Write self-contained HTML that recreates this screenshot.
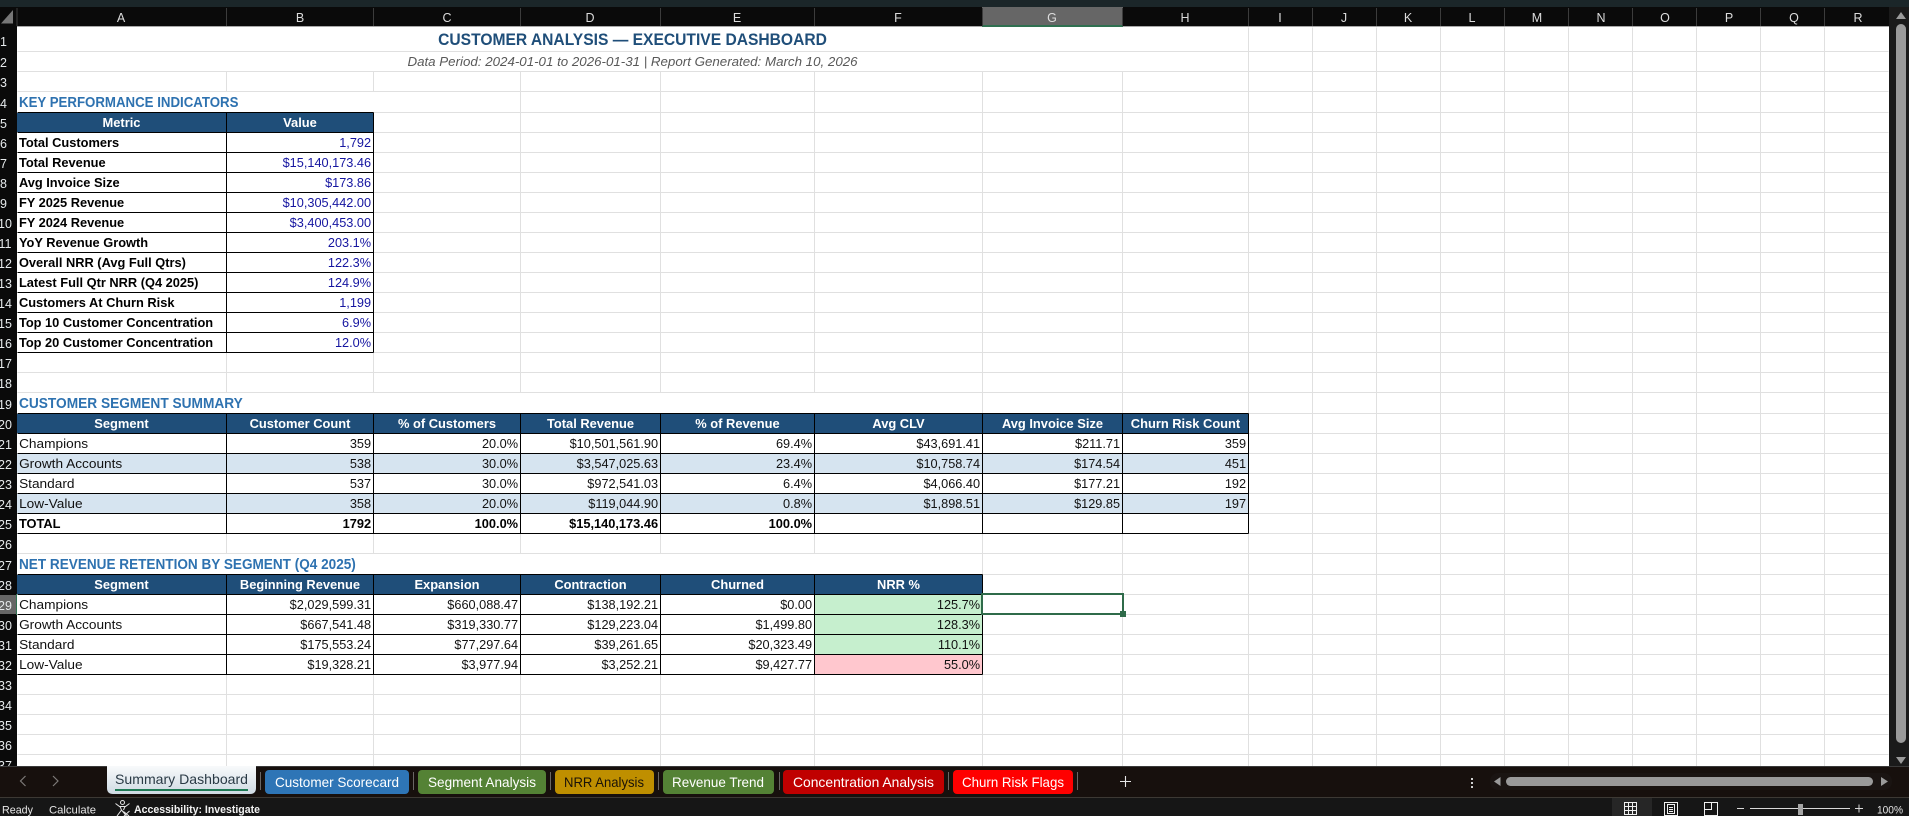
<!DOCTYPE html>
<html><head><meta charset="utf-8"><title>Customer Analysis</title>
<style>
html,body{margin:0;padding:0;background:#fff;width:1909px;height:816px;overflow:hidden}
svg{position:absolute;left:0;top:0}
svg text{font-family:"Liberation Sans",sans-serif}
#cells{position:absolute;left:0;top:0;width:1909px;height:816px;font:13.2px "Liberation Sans",sans-serif;color:#111}
.r{position:absolute;left:0;width:1909px;height:20px}
.r span{position:absolute;top:0;height:20px;line-height:20px;white-space:nowrap;box-sizing:border-box}
.A{left:17px;width:209px}.B{left:227px;width:146px}.C{left:374px;width:146px}.D{left:521px;width:139px}
.E{left:661px;width:153px}.F{left:815px;width:167px}.G{left:983px;width:139px}.H{left:1123px;width:125px}
.n{text-align:right;padding-right:2px;transform-origin:right center;transform:scaleX(.965)}
.l{padding-left:2px;transform-origin:left center;transform:scaleX(1.035)}
.L{padding-left:2px;transform-origin:left center;transform:scaleX(.972);font-weight:bold;color:#000}
.h{text-align:center;color:#fff;font-weight:bold;transform:scaleX(.976)}
.v{color:#1515a0}
.t{font-weight:bold;color:#000;transform:scaleX(.97)}
.sec{position:absolute;left:19px;height:21px;line-height:21px;font-size:14.4px;font-weight:bold;color:#2e72b0;white-space:nowrap;transform-origin:left center}
.title{position:absolute;left:17px;width:1231px;top:27px;height:25px;line-height:25px;text-align:center;font-size:16.8px;font-weight:bold;color:#1f4e79;white-space:nowrap;transform:scaleX(.93)}
.sub{position:absolute;left:17px;width:1231px;top:52px;height:20px;line-height:20px;text-align:center;font-size:12.6px;font-style:italic;color:#595959;white-space:nowrap;transform:scaleX(1.058)}
</style></head>
<body>
<svg width="1909" height="816" viewBox="0 0 1909 816" xmlns="http://www.w3.org/2000/svg">
<rect width="1909" height="816" fill="#fff"/>
<!-- fills -->
<g shape-rendering="crispEdges">
<rect x="17" y="113" width="356" height="19" fill="#1f4e79"/>
<rect x="17" y="414" width="1231" height="19" fill="#1f4e79"/>
<rect x="17" y="575" width="965" height="19" fill="#1f4e79"/>
<rect x="17" y="454" width="1231" height="19" fill="#d6e4f0"/>
<rect x="17" y="494" width="1231" height="19" fill="#d6e4f0"/>
<rect x="815" y="595" width="167" height="59" fill="#c6efce"/>
<rect x="815" y="655" width="167" height="19" fill="#ffc7ce"/>
</g>
<!-- gridlines -->
<g transform="translate(.5,.5)" shape-rendering="crispEdges" fill="none">
<path stroke="#e0e0e0" d="M17 51H1888M17 71H1888M17 91H1888M17 112H1888M17 132H1888M17 152H1888M17 172H1888M17 192H1888M17 212H1888M17 232H1888M17 252H1888M17 272H1888M17 292H1888M17 312H1888M17 332H1888M17 352H1888M17 372H1888M17 392H1888M17 413H1888M17 433H1888M17 453H1888M17 473H1888M17 493H1888M17 513H1888M17 533H1888M17 553H1888M17 574H1888M17 594H1888M17 614H1888M17 634H1888M17 654H1888M17 674H1888M17 694H1888M17 714H1888M17 734H1888M17 754H1888"/>
<path stroke="#e0e0e0" d="M226 71V91M226 112V392M226 413V553M226 574V766M373 71V91M373 112V392M373 413V553M373 574V766M520 71V392M520 413V553M520 574V766M660 71V392M660 413V553M660 574V766M814 71V392M814 413V553M814 574V766M982 71V766M1122 71V766M1248 27V766M1312 27V766M1376 27V766M1440 27V766M1504 27V766M1568 27V766M1632 27V766M1696 27V766M1760 27V766M1824 27V766"/>
<!-- table borders -->
<path stroke="#000" d="M17 112H373M17 132H373M17 152H373M17 172H373M17 192H373M17 212H373M17 232H373M17 252H373M17 272H373M17 292H373M17 312H373M17 332H373M17 352H373M226 112V352M373 112V352"/>
<path stroke="#000" d="M17 413H1248M17 433H1248M17 453H1248M17 473H1248M17 493H1248M17 513H1248M17 533H1248M226 413V533M373 413V533M520 413V533M660 413V533M814 413V533M982 413V533M1122 413V533M1248 413V533"/>
<path stroke="#000" d="M17 574H982M17 594H982M17 614H982M17 634H982M17 654H982M17 674H982M226 574V674M373 574V674M520 574V674M660 574V674M814 574V674M982 574V674"/>
</g>
<!-- top chrome and headers -->
<rect width="1909" height="7" fill="#1b2629"/>
<rect y="7" width="1889" height="19" fill="#0a0a0a"/>
<rect y="26" width="1889" height="1" fill="#a8a8a8"/>
<rect y="7" width="17" height="760" fill="#0a0a0a"/>
<rect y="7" x="982" width="141" height="19" fill="#666"/>
<rect y="25" x="982" width="141" height="2" fill="#2f7050"/>
<rect y="595" x="0" width="17" height="19" fill="#666"/>
<rect y="594" x="16" width="1" height="21" fill="#2f7050"/>
<polygon points="13,10 13,23.5 1,23.5" fill="#777"/>
<path d="M17 8V26M226.5 8V26M373.5 8V26M520.5 8V26M660.5 8V26M814.5 8V26M982.5 8V26M1122.5 8V26M1248.5 8V26M1312.5 8V26M1376.5 8V26M1440.5 8V26M1504.5 8V26M1568.5 8V26M1632.5 8V26M1696.5 8V26M1760.5 8V26M1824.5 8V26" stroke="#3c3c3c" fill="none" shape-rendering="crispEdges"/>
<g font-size="12.5" fill="#dcdcdc" text-anchor="middle">
<text x="121" y="22">A</text><text x="300" y="22">B</text><text x="447" y="22">C</text><text x="590" y="22">D</text><text x="737" y="22">E</text><text x="898" y="22">F</text><text x="1052" y="22">G</text><text x="1185" y="22">H</text><text x="1280" y="22">I</text><text x="1344" y="22">J</text><text x="1408" y="22">K</text><text x="1472" y="22">L</text><text x="1537" y="22">M</text><text x="1601" y="22">N</text><text x="1665" y="22">O</text><text x="1729" y="22">P</text><text x="1794" y="22">Q</text><text x="1858" y="22">R</text>
</g>
<g font-size="12.5" fill="#e6eaec" text-anchor="middle">
<text x="3.5" y="46">1</text><text x="3.5" y="67">2</text><text x="3.5" y="87">3</text><text x="3.5" y="108">4</text><text x="3.5" y="128">5</text><text x="3.5" y="148">6</text><text x="3.5" y="168">7</text><text x="3.5" y="188">8</text><text x="3.5" y="208">9</text>
<text x="5" y="228">10</text><text x="5" y="248">11</text><text x="5" y="268">12</text><text x="5" y="288">13</text><text x="5" y="308">14</text><text x="5" y="328">15</text><text x="5" y="348">16</text><text x="5" y="368">17</text><text x="5" y="388">18</text><text x="5" y="409">19</text><text x="5" y="429">20</text><text x="5" y="449">21</text><text x="5" y="469">22</text><text x="5" y="489">23</text><text x="5" y="509">24</text><text x="5" y="529">25</text><text x="5" y="549">26</text><text x="5" y="570">27</text><text x="5" y="590">28</text><text x="5" y="610">29</text><text x="5" y="630">30</text><text x="5" y="650">31</text><text x="5" y="670">32</text><text x="5" y="690">33</text><text x="5" y="710">34</text><text x="5" y="730">35</text><text x="5" y="750">36</text><text x="5" y="770">37</text>
</g>
<!-- selection -->
<rect x="982" y="594" width="141" height="20" fill="none" stroke="#2f6b4a" stroke-width="2"/>
<rect x="1120" y="611" width="6" height="6" fill="#2f6b4a"/>
<!-- vertical scrollbar -->
<rect x="1889" y="7" width="20" height="760" fill="#1a1a1a"/>
<rect x="1896" y="24" width="10" height="719" rx="5" fill="#9a9a9a"/>
<polygon points="1901,12 1906,19 1896,19" fill="#9a9a9a"/>
<polygon points="1896,757 1906,757 1901,764" fill="#9a9a9a"/>
<!-- tab bar -->
<rect y="766" width="1909" height="32" fill="#17100d"/>
<rect y="766" width="1909" height="1" fill="#3a3a3a"/>
<rect y="797" width="1909" height="1" fill="#3d3934"/>
<rect y="798" width="1909" height="18" fill="#161616"/>
<path d="M25.5 776l-5 5 5 5M53 776l5 5-5 5" fill="none" stroke="#7d7a78" stroke-width="1.2"/>
<defs><linearGradient id="at" x1="0" y1="0" x2="0" y2="1"><stop offset="0" stop-color="#f8fafb"/><stop offset="1" stop-color="#cfdae3"/></linearGradient></defs>
<path d="M107 766H256V788Q256 794 250 794H113Q107 794 107 788Z" fill="url(#at)"/>
<rect x="115" y="789" width="133" height="2" fill="#1f7a55"/>
<text x="115" y="784" font-size="14" fill="#2a3a45" textLength="133" lengthAdjust="spacingAndGlyphs">Summary Dashboard</text>
<g fill="#6a6664" shape-rendering="crispEdges"><rect x="260" y="772" width="1" height="18"/><rect x="413" y="772" width="1" height="18"/><rect x="550" y="772" width="1" height="18"/><rect x="658" y="772" width="1" height="18"/><rect x="779" y="772" width="1" height="18"/><rect x="948" y="772" width="1" height="18"/><rect x="1077" y="772" width="1" height="18"/></g>
<rect x="265" y="770" width="144" height="24" rx="4" fill="#2e75b6"/>
<rect x="418" y="770" width="128" height="24" rx="4" fill="#548235"/>
<rect x="555" y="770" width="99" height="24" rx="4" fill="#bf8f00"/>
<rect x="663" y="770" width="111" height="24" rx="4" fill="#548235"/>
<rect x="783" y="770" width="161" height="24" rx="4" fill="#c00000"/>
<rect x="953" y="770" width="120" height="24" rx="4" fill="#ff0000"/>
<g font-size="14" fill="#fff">
<text x="275" y="787" textLength="124" lengthAdjust="spacingAndGlyphs">Customer Scorecard</text>
<text x="428" y="787" textLength="108" lengthAdjust="spacingAndGlyphs">Segment Analysis</text>
<text x="564" y="787" fill="#1a1208" textLength="80" lengthAdjust="spacingAndGlyphs">NRR Analysis</text>
<text x="672" y="787" textLength="92" lengthAdjust="spacingAndGlyphs">Revenue Trend</text>
<text x="793" y="787" textLength="141" lengthAdjust="spacingAndGlyphs">Concentration Analysis</text>
<text x="962" y="787" textLength="102" lengthAdjust="spacingAndGlyphs">Churn Risk Flags</text>
</g>
<path d="M1125.5 776V787M1120 781.5H1131" stroke="#e6e6e6" stroke-width="1.1" fill="none"/>
<g fill="#d0d0d0"><rect x="1471" y="778" width="2" height="2"/><rect x="1471" y="782" width="2" height="2"/><rect x="1471" y="786" width="2" height="2"/></g>
<!-- horizontal scrollbar -->
<rect x="1490" y="773" width="402" height="17" rx="8" fill="#1a1412"/>
<rect x="1506" y="777" width="367" height="9" rx="4.5" fill="#9a9a9a"/>
<polygon points="1500.5,777 1500.5,786 1494,781.5" fill="#9a9a9a"/>
<polygon points="1881,777 1881,786 1888,781.5" fill="#9a9a9a"/>
<!-- status bar -->
<g font-size="11" fill="#e6e6e6">
<text x="2" y="813.5" textLength="31" lengthAdjust="spacingAndGlyphs">Ready</text>
<text x="49" y="813.5" textLength="47" lengthAdjust="spacingAndGlyphs">Calculate</text>
<text x="134" y="813" font-weight="bold" fill="#f2f2f2" textLength="126" lengthAdjust="spacingAndGlyphs">Accessibility: Investigate</text>
</g>
<g fill="none" stroke="#e6e6e6" stroke-width="1">
<circle cx="122.5" cy="802.5" r="2"/>
<path d="M115.5 803.5L119.5 806.5H125.5L129.5 803.5M120 806.5L121.5 810L117 816M125 806.5L123.5 810M121.5 810L126.5 816M123.5 811.5L129 816M129.5 811L124 816"/>
</g>
<rect x="1612" y="798" width="40" height="18" fill="#262626"/>
<g fill="none" stroke="#f0f0f0" stroke-width="1" shape-rendering="crispEdges">
<path d="M1624.5 802.5H1636.5V814.5H1624.5ZM1628.5 802.5V814.5M1632.5 802.5V814.5M1624.5 806.5H1636.5M1624.5 810.5H1636.5"/>
<path d="M1664.5 802.5H1677.5V815.5H1664.5ZM1667.5 804.5H1674.5V813.5H1667.5ZM1669 807.5H1673M1669 809.5H1673M1669 811.5H1673"/>
<path d="M1704.5 802.5H1717.5V815.5H1704.5ZM1711.5 802.5V809.5H1704.5"/>
</g>
<path d="M1737 808.5H1744M1750 808.5H1850M1855 808.5H1863M1859 804.5V812.5" stroke="#d8d8d8" stroke-width="1" fill="none" shape-rendering="crispEdges"/>
<rect x="1798" y="804" width="5" height="11" fill="#a6a6a6"/>
<text x="1877" y="813.5" font-size="11" fill="#e6e6e6" textLength="26" lengthAdjust="spacingAndGlyphs">100%</text>
</svg>

<div id="cells">
<div class="title">CUSTOMER ANALYSIS — EXECUTIVE DASHBOARD</div>
<div class="sub">Data Period: 2024-01-01 to 2026-01-31 | Report Generated: March 10, 2026</div>
<div class="sec" style="top:93px;transform:scaleX(.921)">KEY PERFORMANCE INDICATORS</div>
<div class="sec" style="top:394px;transform:scaleX(.952)">CUSTOMER SEGMENT SUMMARY</div>
<div class="sec" style="top:555px;transform:scaleX(.943)">NET REVENUE RETENTION BY SEGMENT (Q4 2025)</div>

<div class="r" style="top:113px"><span class="A h">Metric</span><span class="B h">Value</span></div>
<div class="r" style="top:133px"><span class="A L">Total Customers</span><span class="B n v">1,792</span></div>
<div class="r" style="top:153px"><span class="A L">Total Revenue</span><span class="B n v">$15,140,173.46</span></div>
<div class="r" style="top:173px"><span class="A L">Avg Invoice Size</span><span class="B n v">$173.86</span></div>
<div class="r" style="top:193px"><span class="A L">FY 2025 Revenue</span><span class="B n v">$10,305,442.00</span></div>
<div class="r" style="top:213px"><span class="A L">FY 2024 Revenue</span><span class="B n v">$3,400,453.00</span></div>
<div class="r" style="top:233px"><span class="A L">YoY Revenue Growth</span><span class="B n v">203.1%</span></div>
<div class="r" style="top:253px"><span class="A L">Overall NRR (Avg Full Qtrs)</span><span class="B n v">122.3%</span></div>
<div class="r" style="top:273px"><span class="A L">Latest Full Qtr NRR (Q4 2025)</span><span class="B n v">124.9%</span></div>
<div class="r" style="top:293px"><span class="A L">Customers At Churn Risk</span><span class="B n v">1,199</span></div>
<div class="r" style="top:313px"><span class="A L">Top 10 Customer Concentration</span><span class="B n v">6.9%</span></div>
<div class="r" style="top:333px"><span class="A L">Top 20 Customer Concentration</span><span class="B n v">12.0%</span></div>

<div class="r" style="top:414px"><span class="A h">Segment</span><span class="B h">Customer Count</span><span class="C h">% of Customers</span><span class="D h">Total Revenue</span><span class="E h">% of Revenue</span><span class="F h">Avg CLV</span><span class="G h">Avg Invoice Size</span><span class="H h">Churn Risk Count</span></div>
<div class="r" style="top:434px"><span class="A l">Champions</span><span class="B n">359</span><span class="C n">20.0%</span><span class="D n">$10,501,561.90</span><span class="E n">69.4%</span><span class="F n">$43,691.41</span><span class="G n">$211.71</span><span class="H n">359</span></div>
<div class="r" style="top:454px"><span class="A l">Growth Accounts</span><span class="B n">538</span><span class="C n">30.0%</span><span class="D n">$3,547,025.63</span><span class="E n">23.4%</span><span class="F n">$10,758.74</span><span class="G n">$174.54</span><span class="H n">451</span></div>
<div class="r" style="top:474px"><span class="A l">Standard</span><span class="B n">537</span><span class="C n">30.0%</span><span class="D n">$972,541.03</span><span class="E n">6.4%</span><span class="F n">$4,066.40</span><span class="G n">$177.21</span><span class="H n">192</span></div>
<div class="r" style="top:494px"><span class="A l">Low-Value</span><span class="B n">358</span><span class="C n">20.0%</span><span class="D n">$119,044.90</span><span class="E n">0.8%</span><span class="F n">$1,898.51</span><span class="G n">$129.85</span><span class="H n">197</span></div>
<div class="r" style="top:514px"><span class="A L">TOTAL</span><span class="B n t">1792</span><span class="C n t">100.0%</span><span class="D n t">$15,140,173.46</span><span class="E n t">100.0%</span></div>

<div class="r" style="top:575px"><span class="A h">Segment</span><span class="B h">Beginning Revenue</span><span class="C h">Expansion</span><span class="D h">Contraction</span><span class="E h">Churned</span><span class="F h">NRR %</span></div>
<div class="r" style="top:595px"><span class="A l">Champions</span><span class="B n">$2,029,599.31</span><span class="C n">$660,088.47</span><span class="D n">$138,192.21</span><span class="E n">$0.00</span><span class="F n">125.7%</span></div>
<div class="r" style="top:615px"><span class="A l">Growth Accounts</span><span class="B n">$667,541.48</span><span class="C n">$319,330.77</span><span class="D n">$129,223.04</span><span class="E n">$1,499.80</span><span class="F n">128.3%</span></div>
<div class="r" style="top:635px"><span class="A l">Standard</span><span class="B n">$175,553.24</span><span class="C n">$77,297.64</span><span class="D n">$39,261.65</span><span class="E n">$20,323.49</span><span class="F n">110.1%</span></div>
<div class="r" style="top:655px"><span class="A l">Low-Value</span><span class="B n">$19,328.21</span><span class="C n">$3,977.94</span><span class="D n">$3,252.21</span><span class="E n">$9,427.77</span><span class="F n">55.0%</span></div>
</div>
</body></html>
